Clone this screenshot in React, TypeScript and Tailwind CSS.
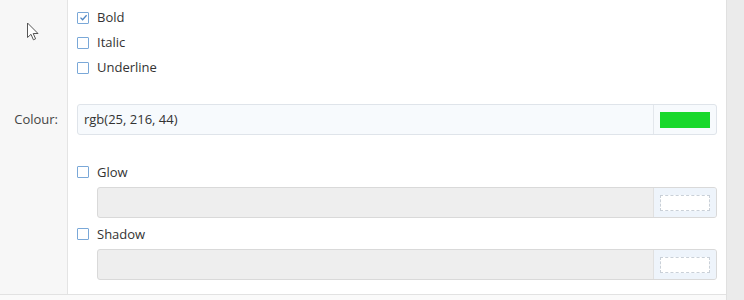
import React from "react";

const font = { fontFamily: '"Open Sans", "Noto Sans", "Liberation Sans", sans-serif' };

function Box({ checked }: { checked?: boolean }) {
  return (
    <div className="w-[12px] h-[12px] shrink-0 rounded-[1px] border-[1.5px] border-[#7aa8d8] bg-white flex items-center justify-center">
      {checked && (
        <svg width="9" height="9" viewBox="0 0 9 9">
          <path d="M1.5 4.6 L3.6 6.7 L7.6 2.2" fill="none" stroke="#4f86c4" strokeWidth="1.3" />
        </svg>
      )}
    </div>
  );
}

function Row({ h, label, children, extra }: { h: string; label?: string; children?: React.ReactNode; extra?: React.ReactNode }) {
  return (
    <div className={`flex ${h}`}>
      <div className="w-[68px] shrink-0 bg-[#f7f7f7] border-r border-[#e4e4e4] flex items-center justify-end pr-[9px] relative text-[13px] text-[#444]">
        {label}
        {extra}
      </div>
      <div className="flex-1 bg-white flex items-center pl-[9px] pr-[9px]">{children}</div>
    </div>
  );
}

function Check({ label, checked }: { label: string; checked?: boolean }) {
  return (
    <div className="flex items-center gap-[8px] text-[13px] text-[#333]">
      <Box checked={checked} />
      <span className="leading-none">{label}</span>
    </div>
  );
}

function Cursor() {
  return (
    <svg className="absolute left-[26px] top-[22px] z-10" width="14" height="20" viewBox="0 0 14 20">
      <path d="M1.5 1 L1.5 15.5 L5 12.3 L7.4 17.8 L9.6 16.8 L7.2 11.5 L12 11.5 Z" fill="white" stroke="#555" strokeWidth="1" strokeLinejoin="round" />
    </svg>
  );
}

function DisabledInput() {
  return (
    <div className="flex-1 h-[31px] ml-[20px] flex rounded-[3px] border border-[#d9d9d9] bg-[#eeeeee] overflow-hidden">
      <div className="flex-1" />
      <div className="w-[63px] border-l border-[#e0e0e0] bg-[#eef4fb] flex items-center justify-center">
        <div className="w-[50px] h-[16px] bg-white border border-dashed border-[#c9d0d8]" />
      </div>
    </div>
  );
}

export default function App() {
  return (
    <div className="flex w-[744px] h-[300px] bg-[#f4f4f4]" style={font}>
      <div className="w-[726px] flex flex-col">
        <Row h="h-[5px]" extra={<Cursor />} />
        <Row h="h-[25px]">
          <Check label="Bold" checked />
        </Row>
        <Row h="h-[25px]">
          <Check label="Italic" />
        </Row>
        <Row h="h-[25px]">
          <Check label="Underline" />
        </Row>
        <Row h="h-[24px]" />
        <Row h="h-[31px]" label="Colour:">
          <div className="flex-1 h-[31px] flex rounded-[3px] border border-[#dfe4ea] bg-[#f7fafd] overflow-hidden">
            <div className="flex-1 flex items-center pl-[6px] text-[13px] text-[#333]">rgb(25, 216, 44)</div>
            <div className="w-[63px] border-l border-[#e3e7ec] flex items-center justify-center">
              <div className="w-[50px] h-[16px] bg-[rgb(25,216,44)]" />
            </div>
          </div>
        </Row>
        <Row h="h-[26px]" />
        <Row h="h-[22px]">
          <Check label="Glow" />
        </Row>
        <Row h="h-[4px]" />
        <Row h="h-[31px]">
          <DisabledInput />
        </Row>
        <Row h="h-[5px]" />
        <Row h="h-[22px]">
          <Check label="Shadow" />
        </Row>
        <Row h="h-[4px]" />
        <Row h="h-[31px]">
          <DisabledInput />
        </Row>
        <Row h="h-[14px]" />
        <div className="h-[1px] bg-[#e2e2e2]" />
        <div className="flex-1 bg-[#fafafa]" />
      </div>
      <div className="flex-1 bg-[#ebebeb] border-l border-[#e0e0e0]" />
    </div>
  );
}
